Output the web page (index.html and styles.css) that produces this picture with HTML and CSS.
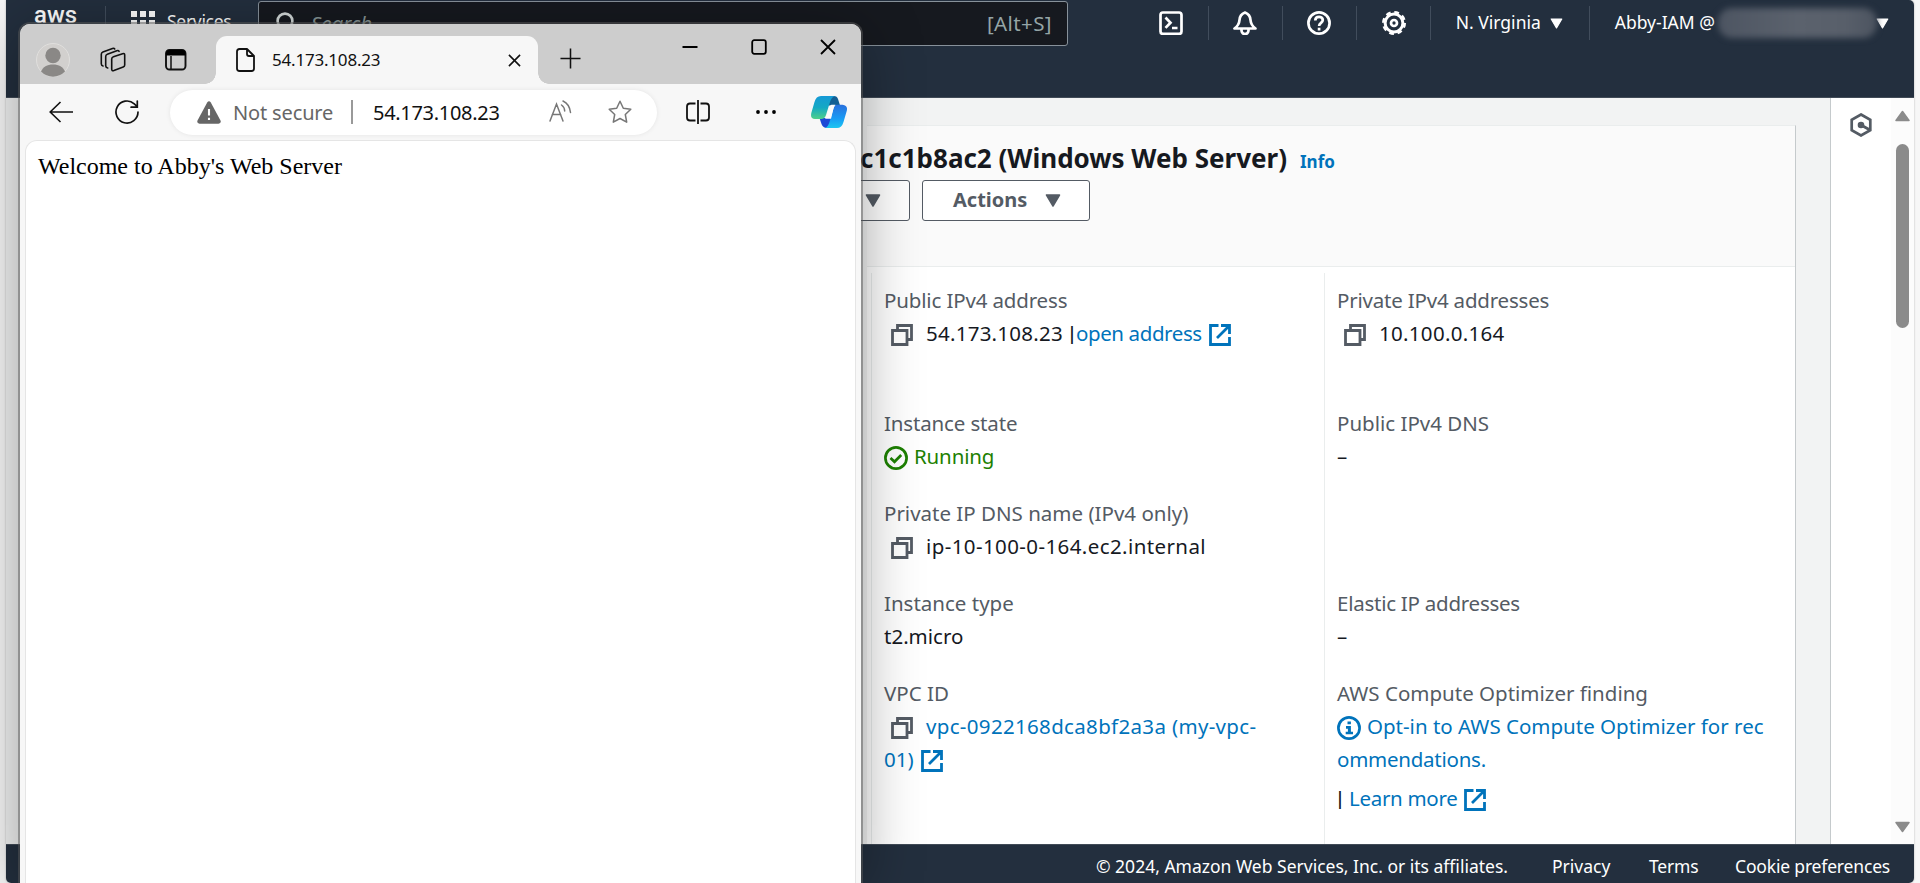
FILE: index.html
```html
<!DOCTYPE html>
<html lang="en">
<head>
<meta charset="utf-8">
<title>Instance details</title>
<link rel="stylesheet" href="styles.css">
</head>
<body>
<svg width="0" height="0" class="defs">
  <defs>
    <symbol id="copy" viewBox="0 0 22 22"><path d="M6.5 6V1.5h14v14H16" fill="none" stroke="#545b64" stroke-width="2.8"/><path d="M1.5 6.5h14.5v14H1.5z" fill="#fff" stroke="#545b64" stroke-width="2.8"/></symbol>
    <symbol id="ext" viewBox="0 0 22 22"><path d="M9.5 1.5h-8v19h19v-7.5M12 1.5h8.5V10M20 2L8 14" fill="none" stroke="#0073bb" stroke-width="2.8"/></symbol>
    <symbol id="down" viewBox="0 0 16 13"><path d="M1.5 1h13L8 12z" fill="currentColor" stroke="currentColor" stroke-width="1.5" stroke-linejoin="round"/></symbol>
  </defs>
</svg>

<div class="console">
  <header class="topbar">
    <svg class="aws" viewBox="0 0 46 30"><text x="0" y="15" class="aws-text" textLength="43" lengthAdjust="spacingAndGlyphs">aws</text></svg>
    <i class="rule r1"></i>
    <svg class="grid" viewBox="0 0 24 24" fill="#fff"><path d="M0 0h6v6H0zM9 0h6v6H9zM18 0h6v6h-6zM0 9h6v6H0zM9 9h6v6H9zM18 9h6v6h-6zM0 18h6v6H0zM9 18h6v6H9zM18 18h6v6h-6z"/></svg>
    <span class="services">Services</span>
    <div class="search">
      <svg width="24" height="24" viewBox="0 0 24 24" fill="none" stroke="#d5dbdb" stroke-width="2.6"><circle cx="9" cy="9" r="7.4"/><path d="M14 14l8 8"/></svg>
      <em>Search</em>
      <span class="keys">[Alt+S]</span>
    </div>
    <div class="tools">
      <svg viewBox="0 0 24 24" fill="none" stroke="#fff" stroke-width="2.7"><rect x="1.5" y="1.5" width="21" height="21.4" rx="2.5"/><path d="M6.5 6.5l5 5.2-5 5.2M13 17h5.5"/></svg>
      <i class="rule"></i>
      <svg viewBox="0 0 24 24" fill="none" stroke="#fff" stroke-width="2.7" stroke-linejoin="round"><path d="M12 1.500c-3.500 1.300-5.300 3.500-5.500 7.500-.3 4-1.500 6-5 8.500h21c-3.500-2.500-4.700-4.500-5-8.500-.2-4-2-6.200-5.500-7.500z"/><path d="M8.500 18v1.500a3.500 3.500 0 0 0 7 0V18"/></svg>
      <i class="rule"></i>
      <svg viewBox="0 0 24 24" fill="none" stroke="#fff" stroke-width="2.7"><circle cx="12" cy="12" r="10.600"/><path d="M8.300 9.500c0-5 7.500-4.600 7.500-.4 0 2.900-3.700 2.600-3.700 5.900M12.100 16.800v2.600"/></svg>
      <i class="rule"></i>
      <svg viewBox="0 0 24 24" fill="none" stroke="#fff"><circle cx="12" cy="12" r="8.900" stroke-width="3"/><circle cx="12" cy="12" r="10.700" stroke-width="2.600" stroke-dasharray="4.700 3.703"/><circle cx="12" cy="12" r="3" stroke-width="2.700"/></svg>
      <i class="rule"></i>
    </div>
    <span class="region">N. Virginia</span>
    <svg class="caret" width="13" height="11"><use href="#down"/></svg>
    <i class="rule r2"></i>
    <span class="user">Abby-IAM @</span>
    <span class="redacted"></span>
    <svg class="caret c2" width="13" height="11"><use href="#down"/></svg>
  </header>

  <div class="middle">
    <main class="panel">
      <div class="panel-head">
        <h1><span class="h-text">c1c1b8ac2 (Windows Web Server)</span><a class="info">Info</a></h1>
        <div class="buttons">
          <span class="btn first"><svg width="16" height="13"><use href="#down"/></svg></span>
          <span class="btn"><span class="btn-text">Actions</span><svg width="16" height="13"><use href="#down"/></svg></span>
        </div>
      </div>
      <div class="cols">
        <section class="col">
          <div class="item tall"><div class="label s1">Public IPv4 address</div>
            <div class="value"><svg class="cp"><use href="#copy"/></svg><span class="v1">54.173.108.23</span><b class="bar b1">|</b><a class="v2">open address</a><svg class="ex"><use href="#ext"/></svg></div></div>
          <div class="item"><div class="label s2">Instance state</div>
            <div class="value ok"><svg class="st" viewBox="0 0 24 24" fill="none" stroke="#1d8102"><circle cx="12" cy="12" r="10.600" stroke-width="2.700"/><path d="M6.500 12l4 3.800 6.700-6.800" stroke-width="2.700"/></svg><span class="v3">Running</span></div></div>
          <div class="item"><div class="label s3">Private IP DNS name (IPv4 only)</div>
            <div class="value"><svg class="cp"><use href="#copy"/></svg><span class="v4">ip-10-100-0-164.ec2.internal</span></div></div>
          <div class="item"><div class="label s4">Instance type</div><div class="value"><span class="v5">t2.micro</span></div></div>
          <div class="item"><div class="label s5">VPC ID</div>
            <div class="value"><svg class="cp"><use href="#copy"/></svg><a class="v6">vpc-0922168dca8bf2a3a (my-vpc-</a></div>
            <div class="value"><a class="v7">01)</a><svg class="ex"><use href="#ext"/></svg></div></div>
        </section>
        <section class="col right">
          <div class="item tall"><div class="label s6">Private IPv4 addresses</div>
            <div class="value"><svg class="cp"><use href="#copy"/></svg><span class="v8">10.100.0.164</span></div></div>
          <div class="item double"><div class="label s7">Public IPv4 DNS</div><div class="value">–</div></div>
          <div class="item"><div class="label s8">Elastic IP addresses</div><div class="value">–</div></div>
          <div class="item"><div class="label s9">AWS Compute Optimizer finding</div>
            <div class="value"><svg class="st" viewBox="0 0 24 24"><circle cx="12" cy="12" r="10.600" fill="none" stroke="#0073bb" stroke-width="2.700"/><path d="M10.500 5.500h3.400v2.800h-3.400zM9 10h4.900v5.700H16V18.300H8.700v-2.600h2.200v-3H9z" fill="#0073bb"/></svg><a class="v9">Opt-in to AWS Compute Optimizer for rec</a></div>
            <div class="value"><a class="v10">ommendations.</a></div>
            <div class="value learn"><b class="bar b2">|</b><a class="v11">Learn more</a><svg class="ex"><use href="#ext"/></svg></div></div>
        </section>
      </div>
    </main>
    <aside class="rail"><svg width="22" height="24" viewBox="0 0 22 24" fill="none" stroke="#545b64" stroke-width="2.700"><path d="M11 1.500l9.300 5.200v10.600L11 22.500l-9.300-5.200V6.700z"/><circle cx="11" cy="12" r="3.300" fill="#545b64" stroke="none"/><path d="M11 12l9 5"/></svg></aside>
    <div class="scroll">
      <svg width="15" height="12" viewBox="0 0 15 12"><path d="M7.500 1.500L14 10.500H1z" fill="#8b8b8b" stroke="#8b8b8b" stroke-width="1.500" stroke-linejoin="round"/></svg>
      <i class="thumb"></i>
      <svg width="15" height="12" viewBox="0 0 15 12"><path d="M7.500 10.500L14 1.500H1z" fill="#8b8b8b" stroke="#8b8b8b" stroke-width="1.500" stroke-linejoin="round"/></svg>
    </div>
  </div>

  <footer class="footer">
    <span class="f1">© 2024, Amazon Web Services, Inc. or its affiliates.</span>
    <span class="f2">Privacy</span>
    <span class="f3">Terms</span>
    <span class="f4">Cookie preferences</span>
  </footer>
</div>

<div class="browser">
  <div class="titlebar">
    <svg class="avatar" viewBox="0 0 34 34"><circle cx="17" cy="17" r="16.500" fill="#d2d0ce" stroke="#e0dfdd"/><circle cx="17" cy="12.500" r="7.700" fill="#8a8886"/><path d="M5 28.500c2-4.500 6-7 12-7s10 2.500 12 7a16.500 16.500 0 0 1-24 0z" fill="#8a8886"/></svg>
    <svg class="spaces" viewBox="0 0 26 26" fill="none" stroke="#111" stroke-width="1.600" stroke-linejoin="round" stroke-linecap="round"><path d="M13.400 9.800l9.200-3.100q2.100-.6 2.100 1.400v9.900q0 1.500-1.500 2.100l-9.300 3.500q-2.200.7-2.200-1.500V12q0-1.600 1.700-2.200z"/><path d="M3 19q-1.700-.4-1.700-2.200V7.200q0-1.600 1.600-2.200L12.500 1.400q1.600-.5 2.200.6"/><path d="M7.700 21q-2-.5-2-2.300V9.400q0-1.600 1.600-2.200L16.800 3.700q1.700-.5 2.300.6"/></svg>
    <svg class="tabs-icon" viewBox="0 0 22 22"><rect x="1" y="1" width="19.500" height="19.500" rx="3.500" fill="none" stroke="#111" stroke-width="1.900"/><path d="M1 6.500V4.500Q1 1 4.500 1h12.500Q20.500 1 20.500 4.500v2z" fill="#000"/><path d="M6 7v13" stroke="#111" stroke-width="1.500"/></svg>
    <div class="tab">
      <svg class="page" viewBox="0 0 19 24" fill="none" stroke="#111" stroke-width="1.800" stroke-linejoin="round"><path d="M3.500 1h7.500l7 7v12.500q0 2.500-2.500 2.500h-12Q1 23 1 20.500v-17Q1 1 3.500 1zM11 1v5q0 2 2 2h5"/></svg>
      <span class="tab-title">54.173.108.23</span>
      <svg class="x" viewBox="0 0 14 14" stroke="#111" stroke-width="1.700"><path d="M1 1l12 12M13 1L1 13"/></svg>
    </div>
    <svg class="plus" viewBox="0 0 22 22" stroke="#111" stroke-width="1.600"><path d="M11 .5v21M.5 11h21"/></svg>
    <div class="controls">
      <svg viewBox="0 0 16 16" stroke="#000" stroke-width="2"><path d="M.5 8h15"/></svg>
      <svg viewBox="0 0 16 16" fill="none" stroke="#000" stroke-width="1.800"><rect x="1.200" y="1.200" width="13.600" height="13.600" rx="2"/></svg>
      <svg viewBox="0 0 16 16" stroke="#000" stroke-width="1.800"><path d="M1 1l14 14M15 1L1 15"/></svg>
    </div>
  </div>
  <div class="toolbar">
    <svg class="back" viewBox="0 0 24 22" fill="none" stroke="#111" stroke-width="1.600"><path d="M24 11H1M11.500 1L1.200 11l10.300 10"/></svg>
    <svg class="reload" viewBox="0 0 24 24" fill="none" stroke="#111" stroke-width="1.700" stroke-linecap="round"><path d="M23 12a11 11 0 1 1-3.700-8.200L22 6.500M22.300 1v6.200h-6.200"/></svg>
    <div class="address">
      <svg class="warn" viewBox="0 0 24 23"><path d="M10.200 1.500q1.800-2.600 3.600 0L23.500 19.500q1 3-2 3.200h-19q-3-.2-2-3.200z" fill="#666"/><path d="M12 8v6.500M12 16.700v2.300" stroke="#fff" stroke-width="2.100"/></svg>
      <span class="not-secure">Not secure</span><i class="sep"></i><span class="url">54.173.108.23</span>
      <svg class="read" viewBox="0 0 23 22" fill="none" stroke="#777" stroke-width="1.500" stroke-linecap="round"><path d="M1 21L7.500 4l6.500 17M3.300 14.500h8.400M12.500 5q3 2 3.200 6M14 1q6.500 3 7.500 11.500"/></svg>
      <svg class="star" viewBox="0 0 24 24" fill="none" stroke="#777" stroke-width="1.500" stroke-linejoin="round"><path d="M12 1.200l3.300 7 7.500 1-5.500 5.300 1.400 7.700-6.700-3.700-6.700 3.700 1.400-7.700L1.200 9.200l7.500-1z"/></svg>
    </div>
    <svg class="split" viewBox="0 0 24 24" fill="none" stroke="#111" stroke-width="1.800"><path d="M9.500 3.500H4Q1 3.500 1 6.500v11q0 3 3 3h5.500M14.500 3.500H20q3 0 3 3v11q0 3-3 3h-5.500M12 0v24"/></svg>
    <svg class="dots" viewBox="0 0 20 4"><circle cx="2" cy="2" r="1.900"/><circle cx="10" cy="2" r="1.900"/><circle cx="18" cy="2" r="1.900"/></svg>
    <svg class="copilot" viewBox="0 0 36 32">
      <defs>
        <linearGradient id="g1" x1="0" y1="0" x2="0" y2="1"><stop offset="0" stop-color="#1599d6"/><stop offset=".5" stop-color="#14a9c4"/><stop offset="1" stop-color="#4fd08a"/></linearGradient>
        <linearGradient id="g2" x1="0" y1="0" x2="0" y2="1"><stop offset="0" stop-color="#2a70dd"/><stop offset=".6" stop-color="#189cf5"/><stop offset="1" stop-color="#1cc6f0"/></linearGradient>
      </defs>
      <path d="M18 0h5q3 0 4 3l2 6.500H17z" fill="#135f94"/>
      <path d="M8.500 22H20v10h-4q-4 0-5.500-4z" fill="#1d48d6"/>
      <path d="M10 0h14q-3.500 1-5 6l-4 13q-1.200 4-5 4H4Q-1 23 .3 17L3.500 6Q5 0 10 0z" fill="url(#g1)"/>
      <path d="M26 8.700h5.500q5.500.5 4.300 6l-3.300 11.300q-1.700 6-6.500 6H14q3-1 4.500-6l4-13.500q1-3.800 3.500-3.800z" fill="url(#g2)"/>
      <path d="M20.500 8.700h4q-1.300 1-2 3.500l-2.500 10.500h-6q1.300-1 2-3.500l2.800-9q.5-1.500 1.700-1.500z" fill="#fbfbfb"/>
    </svg>
  </div>
  <div class="page-body">Welcome to Abby's Web Server</div>
</div>
</body>
</html>
```
FILE: styles.css
```css
* { box-sizing: border-box; }
body {
  margin: 0;
  width: 1920px;
  height: 883px;
  overflow: hidden;
  position: relative;
  background: #f7f7f7;
  font-family: "Noto Sans", "Open Sans", sans-serif;
  font-size: 20.5px;
  color: #16191f;
}
svg { display: block; flex: none; }
i, b, em { flex: none; }
span, a { white-space: nowrap; flex: none; }
.defs { position: absolute; }

.console {
  width: 1908px;
  height: 883px;
  margin-left: 6px;
  display: flex;
  flex-direction: column;
  background: #f2f3f3;
  border-radius: 0 5px 5px 5px;
  overflow: hidden;
  box-shadow: 0 0 2px #aaa;
}

/* Top navigation */
.topbar {
  height: 98px;
  flex: none;
  background: #232f3e;
  border-bottom: 1px solid #414b57;
  display: flex;
  align-items: flex-start;
  color: #fff;
  font-size: 17.5px;
  line-height: 24px;
}
.aws { width: 46px; height: 30px; margin: 8px 0 0 28px; overflow: visible; }
.aws-text { font: 500 24px Roboto, sans-serif; fill: #fff; }
.rule { width: 1px; height: 34px; margin-top: 6px; background: #414d5c; }
.r1 { margin-left: 25px; }
.grid { width: 24px; height: 24px; margin: 11px 0 0 25px; }
.services { width: 66px; margin: 9px 0 0 12px; letter-spacing: -.3px; }
.search {
  width: 810px;
  height: 45px;
  margin: 1px 0 0 25px;
  padding: 0 15px 0 17px;
  display: flex;
  align-items: center;
  background: #16191f;
  border: 1px solid #87919a;
  border-radius: 3px;
}
.search em { margin-left: 11px; margin-top: -2px; color: #879596; font-size: 20.5px; }
.keys { margin-left: auto; margin-top: -1px; color: #95a5a6; font-size: 20.5px; letter-spacing: .4px; }
.tools { display: flex; margin-left: 91px; }
.tools svg { width: 24px; height: 24px; margin-top: 11px; }
.tools .rule { margin-left: 24.6px; margin-right: 24.6px; }
.region { width: 84px; margin-top: 10px; }
.caret { margin: 18px 0 0 10px; }
.r2 { margin-left: 26px; }
.user { width: 103px; margin: 10px 0 0 25px; }
.redacted {
  width: 159px;
  height: 30px;
  margin-top: 8px;
  border-radius: 14px;
  background: linear-gradient(90deg, #4d5562, #5b626d 50%, #585f6a 80%, #4c5460);
  filter: blur(3px);
}
.c2 { margin-left: -1px; }

/* Main area */
.middle { height: 746px; flex: none; display: flex; justify-content: flex-end; }
.panel {
  width: 929px;
  margin: 27px 34px 0 0;
  border: solid #eaeded;
  border-width: 1px 0 0;
  border-right: 1px solid #c5cacc;
  background: #fff;
}
.panel-head {
  height: 141px;
  background: #fafafa;
  border-bottom: 1px solid #eaeded;
}
h1 { margin: 0 0 0 -7px; height: 54px; display: flex; align-items: baseline; font-size: 26px; line-height: 64px; }
.h-text { width: 426px; }
.info { margin-left: 14px; color: #0073bb; font-size: 17px; }
.buttons { display: flex; gap: 12px; color: #545b64; }
.btn {
  width: 168px;
  height: 41px;
  display: flex;
  align-items: center;
  padding-left: 30px;
  background: #fff;
  border: 1px solid #545b64;
  border-radius: 3px;
  font-weight: bold;
  font-size: 20px;
}
.btn.first { width: 61px; margin-left: -18px; padding-left: 15px; }
.btn-text { width: 75px; margin: -2px 17px 0 0; }
.cols { display: flex; margin: 6px 0 0 4px; height: 571px; }
.col { width: 453px; padding: 11px 0 0 13px; border-left: 1px solid #eaeded; }
.col:first-child { padding-left: 13px; }
.item { height: 90px; line-height: 33px; }
.item.tall { height: 123px; }
.item.double { height: 180px; }
.label { color: #545b64; white-space: nowrap; height: 33px; margin-left: -1px; }
.value { display: flex; align-items: center; height: 33px; margin-left: -1px; }
.value a { color: #0073bb; }
.cp { width: 22px; height: 22px; margin: 2px 13px 0 7px; }
.ex { width: 22px; height: 22px; margin: 2px 0 0 7px; }
.st { width: 24px; height: 24px; margin: 3px 6px 0 0; }
.bar { font-weight: 600; font-size: 18px; width: 10px; }
.b1 { margin-left: 4px; width: 9px; }
.b2 { margin: 0 4px 0 -2px; }
.ok { color: #1d8102; }
.learn { margin-top: 6px; }
.s1, .s2, .v3 { letter-spacing: -.15px; }
.s6 { letter-spacing: -.2px; }
.s8, .v10 { letter-spacing: -.25px; }
.v1 { letter-spacing: .25px; }
.v2 { letter-spacing: -.4px; }
.v4 { letter-spacing: .4px; }
.v6 { letter-spacing: .33px; }
.v8 { letter-spacing: .3px; }
.v11 { letter-spacing: -.3px; }

.rail { width: 61px; flex: none; background: #fff; border-left: 1px solid #c5cacc; padding: 15px 0 0 19px; }
.scroll { width: 23px; flex: none; background: #fcfcfc; padding: 12px 0 11px 4px; display: flex; flex-direction: column; }
.thumb { width: 13px; height: 184px; margin: 22px 0 auto 1px; border-radius: 7px; background: #8b8b8b; }

.footer {
  height: 39px;
  background: #232f3e;
  border-top: 1px solid #414b57;
  display: flex;
  color: #fff;
  font-size: 17.5px;
  line-height: 43px;
  padding-left: 1090px;
}
.f1 { width: 411px; margin-right: 45px; }
.f2 { width: 58px; margin-right: 39px; }
.f3 { width: 49px; margin-right: 37px; letter-spacing: -.2px; }
.f4 { letter-spacing: -.17px; }

/* Foreground browser window */
.browser {
  position: absolute;
  left: 20px;
  top: 24px;
  width: 841px;
  height: 859px;
  display: flex;
  flex-direction: column;
  background: #f7f7f7;
  border-radius: 10px 10px 0 0;
  box-shadow: 0 0 0 2px rgba(90, 90, 90, .5), 0 8px 60px rgba(0, 0, 0, .36);
  color: #111;
}
.titlebar { height: 60px; display: flex; background: #cdcdcd; border-radius: 10px 10px 0 0; }
.avatar { width: 34px; height: 34px; margin: 19px 0 0 16px; }
.spaces { width: 26px; height: 26px; margin: 23px 0 0 30px; }
.tabs-icon { width: 22px; height: 22px; margin: 25px 0 0 39px; }
.tab {
  width: 322px;
  height: 48px;
  margin: 12px 0 0 29px;
  padding: 0 17px 0 20px;
  display: flex;
  align-items: center;
  background: #f7f7f7;
  border-radius: 11px 11px 0 0;
  position: relative;
}
.tab::before, .tab::after {
  content: "";
  position: absolute;
  bottom: 0;
  width: 11px;
  height: 11px;
}
.tab::before { left: -11px; background: radial-gradient(circle at 0 0, #cdcdcd 10.5px, #f7f7f7 11px); }
.tab::after { right: -11px; background: radial-gradient(circle at 100% 0, #cdcdcd 10.5px, #f7f7f7 11px); }
.page { width: 19px; height: 24px; }
.tab-title { margin: -2px 0 0 17px; font-size: 17px; letter-spacing: -.2px; }
.x { width: 13px; height: 13px; margin-left: auto; }
.plus { width: 21px; height: 21px; margin: 24px 0 0 22px; }
.controls { display: flex; gap: 53px; margin: 15px 0 0 101px; }
.controls svg { width: 16px; height: 16px; }
.toolbar { height: 56px; display: flex; align-items: center; }
.back { width: 24px; height: 22px; margin-left: 29px; }
.reload { width: 24px; height: 24px; margin-left: 42px; }
.address {
  width: 487px;
  height: 45px;
  margin-left: 31px;
  padding-left: 27px;
  display: flex;
  align-items: center;
  background: #fff;
  border-radius: 23px;
  box-shadow: 0 0 5px rgba(0, 0, 0, .08);
  font-size: 20px;
}
.warn { width: 24px; height: 23px; }
.not-secure { width: 100px; margin-left: 12px; color: #666; letter-spacing: -.15px; }
.sep { width: 2px; height: 24px; margin: 0 20px 0 18px; background: #999; }
.url { width: 126px; letter-spacing: -.3px; }
.read { width: 23px; height: 22px; margin: -3px 0 0 50px; }
.star { width: 24px; height: 24px; margin-left: 36px; }
.split { width: 24px; height: 24px; margin-left: 29px; }
.dots { width: 20px; height: 4px; margin-left: 46px; }
.copilot { width: 36px; height: 32px; margin-left: 35px; }
.page-body {
  flex: 1;
  margin: 0 5px;
  padding: 12px 12px;
  background: #fff;
  border: 1px solid #e5e5e5;
  border-bottom: 0;
  border-radius: 12px 12px 0 0;
  font: 24px "Liberation Serif", serif;
  color: #000;
}
```
